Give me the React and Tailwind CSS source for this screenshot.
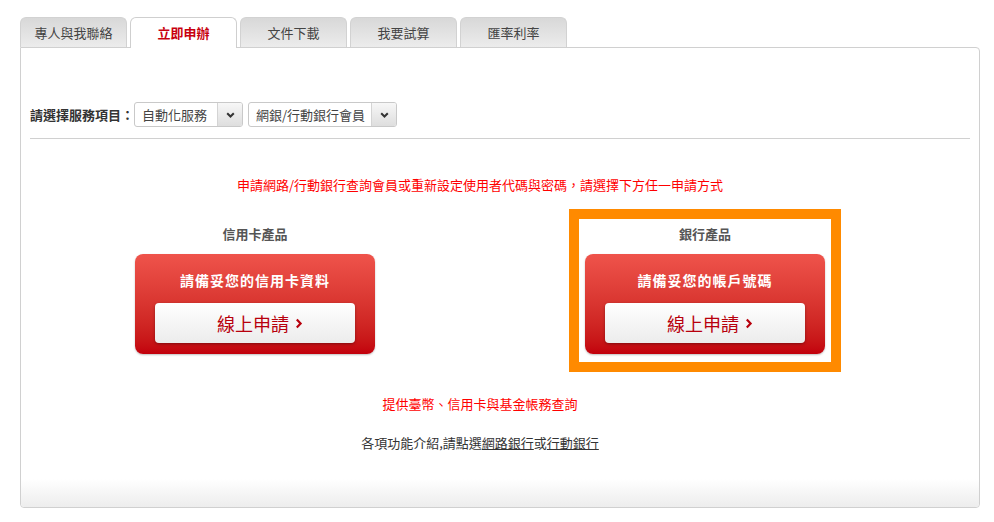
import React from 'react'

const TABS = ['專人與我聯絡', '立即申辦', '文件下載', '我要試算', '匯率利率']

const Chevron = () => (
  <svg width="9" height="6" viewBox="0 0 9 6" className="block">
    <path d="M1.2 1.2 L4.5 4.5 L7.8 1.2" fill="none" stroke="#333" strokeWidth="2" />
  </svg>
)

const Select = ({ label, width }) => (
  <div className={`flex h-[25px] rounded-[3px] border border-[#c9c9c9] bg-white overflow-hidden ${width}`}>
    <div className="flex-1 pl-[7px] text-[13px] leading-[23px] text-[#444] whitespace-nowrap">{label}</div>
    <div className="w-[25px] flex items-center justify-center border-l border-[#d4d4d4] bg-gradient-to-b from-[#f7f7f7] to-[#dedede]">
      <Chevron />
    </div>
  </div>
)

const ProductBox = ({ title, desc, highlight }) => (
  <div className={`w-[272px] border-[10px] px-[5px] pt-[6px] pb-[8px] ${highlight ? 'border-[#ff8a00]' : 'border-transparent'}`}>
    <div className="text-center text-[13px] leading-[18px] font-bold text-[#555]">{title}</div>
    <div className="mt-[11px] mx-auto w-[240px] h-[100px] rounded-[8px] bg-gradient-to-b from-[#ef534b] to-[#c2000c] px-[20px] pt-[16px] shadow-[0_1px_2px_rgba(0,0,0,0.25)]">
      <div className="text-center text-white text-[14px] leading-[20px] font-bold tracking-[1px]">{desc}</div>
      <a className="mt-[13px] flex h-[40px] items-center justify-center gap-[6px] pl-[10px] rounded-[4px] bg-gradient-to-b from-white to-[#ececec] shadow-[0_1px_3px_rgba(0,0,0,0.35)] text-[18px] text-[#b8000d] cursor-pointer">
        <span className="leading-[24px]">線上申請</span>
        <svg width="8" height="11" viewBox="0 0 8 11" className="block mt-[1px]">
          <path d="M1.8 1.5 L5.6 5.5 L1.8 9.5" fill="none" stroke="#b8000d" strokeWidth="2.2" />
        </svg>
      </a>
    </div>
  </div>
)

export default function App() {
  return (
    <div className="w-[994px] h-[522px] bg-white font-['Noto_Sans_CJK_TC','Noto_Sans',sans-serif]">
      <div className="pt-[17px] pl-[20px]">
        <ul className="flex gap-[3px] relative z-10">
          {TABS.map((t, i) => (
            <li
              key={t}
              className={
                i === 1
                  ? 'w-[107px] h-[31px] -mb-[1px] rounded-t-[6px] border border-b-0 border-[#cfcfcf] bg-white text-center text-[13px] leading-[30px] font-bold text-[#c8000f]'
                  : 'w-[107px] h-[30px] rounded-t-[6px] border border-b-0 border-[#d2d2d2] bg-gradient-to-b from-[#d8d8d8] to-[#ececec] text-center text-[13px] leading-[30px] text-[#444]'
              }
            >
              {t}
            </li>
          ))}
        </ul>

        <div className="w-[960px] rounded-b-[4px] rounded-tr-[4px] border border-[#d0d0d0] bg-white">
          <div className="px-[9px] pt-[54px]">
            <div className="flex items-center">
              <span className="text-[13px] font-bold text-[#333] leading-[25px] whitespace-nowrap">請選擇服務項目：</span>
              <Select label="自動化服務" width="w-[109px]" />
              <div className="w-[5px]" />
              <Select label="網銀/行動銀行會員" width="w-[149px]" />
            </div>
            <div className="mt-[11px] border-t border-[#d0d0d0]" />
          </div>

          <div className="w-[900px] ml-[9px]">
            <p className="mt-[36px] text-center text-[13px] leading-[20px] text-[#f00]">
              申請網路/行動銀行查詢會員或重新設定使用者代碼與密碼，請選擇下方任一申請方式
            </p>
            <div className="mt-[14px] grid grid-cols-2">
              <div className="flex justify-center">
                <ProductBox title="信用卡產品" desc="請備妥您的信用卡資料" />
              </div>
              <div className="flex justify-center">
                <ProductBox title="銀行產品" desc="請備妥您的帳戶號碼" highlight />
              </div>
            </div>
            <p className="mt-[22px] text-center text-[13px] leading-[20px] text-[#f00]">提供臺幣、信用卡與基金帳務查詢</p>
            <p className="mt-[19px] text-center text-[13px] leading-[20px] text-[#333]">
              各項功能介紹,請點選<a className="underline cursor-pointer">網路銀行</a>或<a className="underline cursor-pointer">行動銀行</a>
            </p>
          </div>

          <div className="mt-[26px] h-[28px] rounded-b-[4px] bg-gradient-to-b from-white to-[#ededed]" />
        </div>
      </div>
    </div>
  )
}
